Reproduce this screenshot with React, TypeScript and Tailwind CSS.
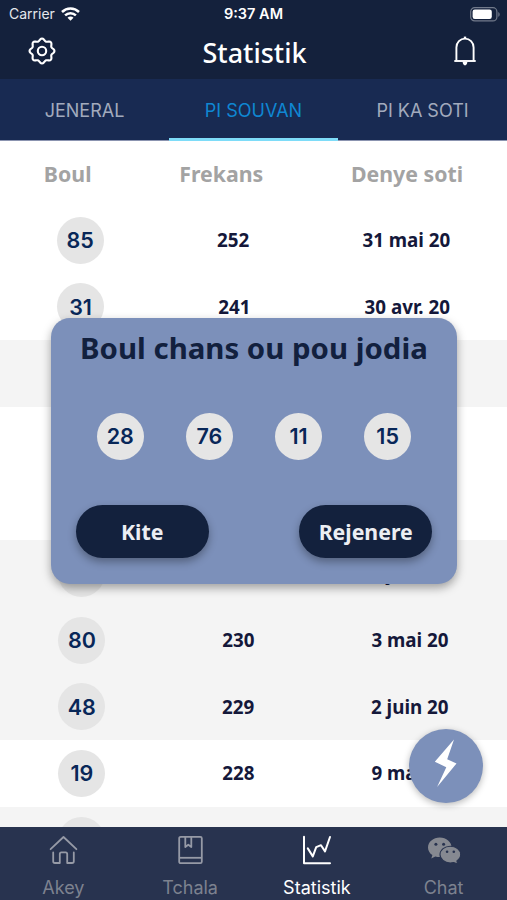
import { clsx } from "clsx";

type BallRow = {
  boul: string;
  frekans: string;
  date: string;
  shaded?: boolean;
};

const rows: BallRow[] = [
  { boul: "85", frekans: "252", date: "31 mai 20" },
  { boul: "31", frekans: "241", date: "30 avr. 20" },
  { boul: "52", frekans: "236", date: "1 juin 20", shaded: true },
  { boul: "07", frekans: "234", date: "28 mai 20" },
  { boul: "64", frekans: "233", date: "25 mai 20" },
  { boul: "90", frekans: "231", date: "1 juin 20", shaded: true },
  { boul: "80", frekans: "230", date: "3 mai 20", shaded: true },
  { boul: "48", frekans: "229", date: "2 juin 20", shaded: true },
  { boul: "19", frekans: "228", date: "9 mai 20" },
  { boul: "22", frekans: "227", date: "5 mai 20", shaded: true },
];

const luckyBalls = ["28", "76", "11", "15"];
const tabs = ["JENERAL", "PI SOUVAN", "PI KA SOTI"];

// eight soft lobes around the centre
const gearPoints = Array.from({ length: 96 }, (_, i) => {
  const a = (i / 96) * Math.PI * 2;
  const r = 11.3 + Math.cos(a * 8) * 1.15;
  return `${(14 + r * Math.sin(a)).toFixed(2)},${(14 - r * Math.cos(a)).toFixed(2)}`;
}).join(" ");

function GearIcon() {
  return (
    <svg width="28" height="28" viewBox="0 0 28 28" fill="none" stroke="currentColor" strokeWidth="2.1">
      <polygon points={gearPoints} strokeLinejoin="round" />
      <circle cx="14" cy="14" r="4.2" />
    </svg>
  );
}

function BellIcon() {
  return (
    <svg width="24" height="30" viewBox="0 0 24 30" fill="none" stroke="currentColor" strokeWidth="1.9">
      <path d="M3.4 24.8V11.5a8.6 8.9 0 0 1 17.2 0v13.3" />
      <path d="M1.3 25h21.4" />
      <path d="M12 0.6v2" strokeWidth="2.4" />
      <path d="M9.7 26h4.6c0 1.8-.9 3.4-2.3 3.4S9.7 27.8 9.7 26z" fill="currentColor" stroke="none" />
    </svg>
  );
}

function WifiIcon() {
  return (
    <svg width="19" height="14" viewBox="0 0 19 14" fill="none" stroke="#fff" strokeWidth="2.5">
      <path d="M1 5a12.2 12.2 0 0 1 17 0" />
      <path d="M4.1 8.4a7.7 7.7 0 0 1 10.8 0" />
      <path d="M9.5 13.7 6.5 10.7a4.2 4.2 0 0 1 6 0z" fill="#fff" stroke="none" />
    </svg>
  );
}

function BatteryIcon() {
  return (
    <svg width="31" height="15" viewBox="0 0 31 15" fill="none">
      <rect x="0.7" y="0.7" width="26.2" height="13.2" rx="4" stroke="#727a8b" strokeWidth="1.2" />
      <rect x="2.6" y="2.6" width="19.2" height="9.4" rx="2.2" fill="#fff" />
      <path d="M28.3 5v4.8c1.8-.7 1.8-4.1 0-4.8z" fill="#727a8b" />
    </svg>
  );
}

function HomeIcon() {
  return (
    <svg width="30" height="30" viewBox="0 0 30 30" fill="none" stroke="currentColor" strokeWidth="1.8" strokeLinecap="round" strokeLinejoin="round">
      <path d="M2.6 14.2 15.5 2l12.9 12.2" />
      <path d="M5.2 17.4v8.8q0 1.8 1.8 1.8h4.8v-9q0-1.6 1.6-1.6h4.2q1.6 0 1.6 1.6v9h4.8q1.8 0 1.8-1.8v-8.8" />
    </svg>
  );
}

function BookIcon() {
  return (
    <svg width="30" height="30" viewBox="0 0 30 30" fill="none" stroke="currentColor" strokeWidth="1.8" strokeLinejoin="round">
      <rect x="4.2" y="1.8" width="22.6" height="26.4" rx="1.5" />
      <path d="M4.5 22.8h22" />
      <path d="M10.3 2v10l3-2.3 3 2.3V2" />
    </svg>
  );
}

function ChartIcon() {
  return (
    <svg width="30" height="30" viewBox="0 0 30 30" fill="none" stroke="currentColor" strokeWidth="2" strokeLinecap="round" strokeLinejoin="round">
      <path d="M2 1.8v26.4h26" />
      <path d="m5.8 13.4 5 8 3.4-9.2 4.8-2 4 6.2L28 2" />
    </svg>
  );
}

function WechatIcon() {
  return (
    <svg width="34" height="30" viewBox="0 0 34 30">
      <path d="M12.8 2.5C6.3 2.5 1 6.9 1 12.4c0 3.1 1.7 5.9 4.4 7.7l-1.1 3.3 4-2c1.4.4 2.9.7 4.5.7 6.5 0 11.8-4.3 11.8-9.7S19.3 2.5 12.8 2.5z" fill="currentColor" />
      <path d="M23.3 11.2c-5.7 0-10.3 3.8-10.3 8.4S17.6 28 23.3 28c1.2 0 2.3-.2 3.4-.5l4 1.6-.8-3.2c2.3-1.5 3.8-3.8 3.8-6.3 0-4.6-4.7-8.4-10.4-8.4z" fill="currentColor" stroke="#28334f" strokeWidth="1.1" />
      <g fill="#28334f">
        <circle cx="8.9" cy="9.3" r="1.5" />
        <circle cx="16.6" cy="9.3" r="1.5" />
        <circle cx="20.1" cy="16.7" r="1.3" />
        <circle cx="26.8" cy="16.7" r="1.3" />
      </g>
    </svg>
  );
}

const navItems = [
  { label: "Akey", icon: HomeIcon },
  { label: "Tchala", icon: BookIcon },
  { label: "Statistik", icon: ChartIcon, active: true },
  { label: "Chat", icon: WechatIcon, dim: true },
];

function Ball({ value }: { value: string }) {
  return (
    <span className="flex size-[47px] shrink-0 items-center justify-center rounded-full bg-[#e5e5e5] font-['Inter',sans-serif] text-[21.5px] font-semibold text-[#082758]">
      {value}
    </span>
  );
}

export default function App() {
  return (
    <div className="relative flex h-[900px] w-[507px] flex-col overflow-hidden bg-white font-['Noto_Sans',sans-serif]">
      <header className="h-[79px] shrink-0 bg-[#14213c] text-white">
        <div className="grid h-7 grid-cols-3 items-center px-[9px] font-['Inter',sans-serif] text-sm">
          <div className="flex items-center gap-1.5 text-[#e4e7ec]">
            <span>Carrier</span>
            <WifiIcon />
          </div>
          <span className="text-center text-[14.5px] font-semibold whitespace-nowrap">9:37 AM</span>
          <div className="-mr-[3px] flex justify-end">
            <BatteryIcon />
          </div>
        </div>
        <div className="flex h-[46px] items-center justify-between pr-[30px] pl-7">
          <GearIcon />
          <h1 className="pt-1 text-[27px] font-medium">Statistik</h1>
          <BellIcon />
        </div>
      </header>

      <nav className="grid h-[62px] shrink-0 grid-cols-3 bg-[#182a52] font-['Inter',sans-serif] text-lg">
        {tabs.map(tab => (
          <button
            key={tab}
            className={clsx(
              "flex items-center justify-center",
              tab === "PI SOUVAN"
                ? "border-b-[3px] border-[#7edcf8] pt-[5px] text-[#0f87d2]"
                : "border-b border-[#8b94b0] pt-[3px] text-[#a2aabd]"
            )}
          >
            {tab}
          </button>
        ))}
      </nav>

      <main className="min-h-0 flex-1 overflow-hidden">
        <div className="flex h-[65.7px] items-center justify-around text-[21.3px] font-bold text-[#a3a3a3]">
          <span>Boul</span>
          <span>Frekans</span>
          <span>Denye soti</span>
        </div>
        {rows.map((row, i) => (
          <div
            key={i}
            className={clsx(
              "flex h-[66.7px] items-center justify-around text-[18.8px] font-bold text-[#14183a]",
              row.shaded && "bg-[#f4f4f4]"
            )}
          >
            <Ball value={row.boul} />
            <span>{row.frekans}</span>
            <span>{row.date}</span>
          </div>
        ))}
      </main>

      {/* Bottom navigation */}
      <nav className="grid h-[73px] shrink-0 grid-cols-4 bg-[#28334f] pt-2 font-['Inter',sans-serif] text-lg">
        {navItems.map(({ label, icon: Icon, active, dim }) => (
          <button
            key={label}
            className={clsx(
              "flex flex-col items-center gap-[9px]",
              active ? "text-white" : dim ? "text-[#868991]" : "text-[#969aa6]"
            )}
          >
            <Icon />
            <span className={active ? "" : "text-[#7d828f]"}>{label}</span>
          </button>
        ))}
      </nav>

      {/* Floating draw button */}
      <button className="absolute top-[729px] left-[409px] flex size-[74px] items-center justify-center rounded-full bg-[#7c90ba] shadow-[0_2px_7px_rgba(0,0,0,0.28)]">
        <svg width="24" height="54" viewBox="0 0 24 54" fill="#fff">
          <path d="M20 .5.8 22.7l11.5 5.5L3.1 48l19.4-23.5-9.3-4.3z" />
        </svg>
      </button>

      {/* Lucky numbers dialog */}
      <section
        role="dialog"
        className="absolute top-[317.5px] left-[50.7px] flex h-[266px] w-[406.5px] flex-col rounded-[19px] bg-[#7c90ba] px-[25px] shadow-[0_4px_10px_rgba(0,0,0,0.35)]"
      >
        <h2 className="mt-[9px] text-center text-[29.4px] leading-[42px] font-bold whitespace-nowrap text-[#12203e]">
          Boul chans ou pou jodia
        </h2>
        <div className="mt-11 flex justify-around">
          {luckyBalls.map(n => (
            <Ball key={n} value={n} />
          ))}
        </div>
        <div className="mt-[45px] flex justify-between text-[21.3px] font-bold text-[#eceef3]">
          <button className="h-[53px] w-[133px] rounded-full bg-[#13213d] pt-px shadow-[0_4px_8px_rgba(0,0,0,0.32)]">Kite</button>
          <button className="h-[53px] w-[133px] rounded-full bg-[#13213d] pt-px shadow-[0_4px_8px_rgba(0,0,0,0.32)]">Rejenere</button>
        </div>
      </section>
    </div>
  );
}
